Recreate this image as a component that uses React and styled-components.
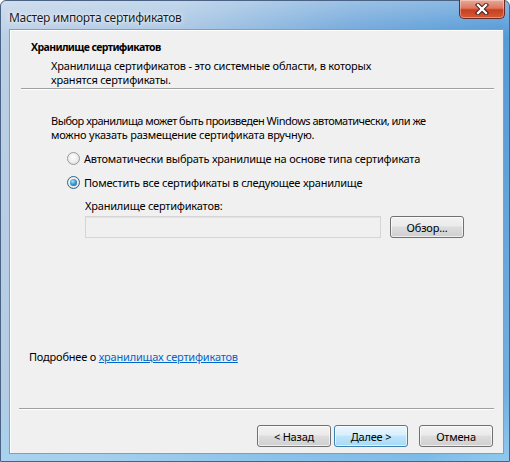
import React from "react";
import styled, { createGlobalStyle } from "styled-components";

const Global = createGlobalStyle`
  html, body { margin: 0; padding: 0; background: #fff; }
  body {
    font-family: "Noto Sans", "Open Sans", sans-serif;
    font-size: 11px;
    letter-spacing: -0.2px;
    color: #000;
  }
  * { box-sizing: border-box; }
`;

const Frame = styled.div`
  width: 510px;
  height: 462px;
  display: flex;
  flex-direction: column;
  padding: 0 5px 7px 8px;
  border: 1px solid #4a6384;
  border-radius: 6px 6px 0 0;
  background:
    linear-gradient(180deg, rgba(255,255,255,0.3) 0%, rgba(255,255,255,0) 8%),
    linear-gradient(180deg, rgba(255,255,255,0) 85%, rgba(160,215,245,0.6) 100%),
    linear-gradient(100deg, #bcd0e6 0%, #a9c6e3 30%, #6fa6da 60%, #4f97d6 85%, #78b4e2 100%);
`;

const TitleBar = styled.div`
  height: 28px;
  display: flex;
  align-items: flex-start;
  justify-content: space-between;
`;

const Title = styled.span`
  margin-top: 10px;
  font-size: 12px;
  letter-spacing: -0.3px;
  line-height: 14px;
  color: #1a1a1a;
  text-shadow: 0 0 6px rgba(255,255,255,0.9), 0 0 2px rgba(255,255,255,0.9);
`;

const CloseButton = styled.div`
  width: 46px;
  height: 19px;
  margin-top: -1px;
  margin-right: -1px;
  border: 1px solid #6b2b22;
  border-top: none;
  border-radius: 0 0 5px 5px;
  display: flex;
  align-items: center;
  justify-content: center;
  background: linear-gradient(180deg, #eaa898 0%, #dc7760 45%, #c8401f 55%, #d35a3a 100%);
  box-shadow: inset 0 0 0 1px rgba(255,255,255,0.35);
`;

const Client = styled.div`
  flex: 1;
  display: flex;
  flex-direction: column;
  background: #f0f0f0;
  border: 1px solid #8b9cae;
  box-shadow: inset 1px 1px 0 #fff;
`;

const Header = styled.div`
  height: 58px;
  padding: 10px 0 0 21px;
`;

const HeaderTitle = styled.div`
  font-size: 10.5px;
  font-weight: bold;
  line-height: 14px;
  margin-bottom: 5px;
  letter-spacing: -0.6px;
`;

const Text = styled.div`
  line-height: 14px;
  white-space: nowrap;
  padding-left: ${(p) => p.indent || 0}px;
  letter-spacing: ${(p) => (p.tight ? "-0.5px" : "inherit")};
`;

const Separator = styled.div`
  margin: 0 ${(p) => p.right}px 0 ${(p) => p.left}px;
  height: 2px;
  border-top: 1px solid #a0a0a0;
  border-bottom: 1px solid #ffffff;
`;

const Body = styled.div`
  flex: 1;
  display: flex;
  flex-direction: column;
  padding: 24px 0 0 41px;
`;

const RadioRow = styled.label`
  display: flex;
  align-items: center;
  gap: 4px;
  height: 16px;
  margin-left: 16px;
  margin-top: ${(p) => p.top}px;
  white-space: nowrap;
`;

const RadioDot = styled.span`
  flex: none;
  width: 13px;
  height: 13px;
  border-radius: 50%;
  border: 1px solid ${(p) => (p.checked ? "#2c628b" : "#9a9a9a")};
  background: radial-gradient(circle at 45% 40%, #ffffff 0%, #ececec 55%, #cfcfcf 100%);
  display: flex;
  align-items: center;
  justify-content: center;
  &::after {
    content: "";
    display: ${(p) => (p.checked ? "block" : "none")};
    width: 7px;
    height: 7px;
    border-radius: 50%;
    background: radial-gradient(circle at 40% 35%, #a8e3fb 0%, #3c9bd4 45%, #13527f 100%);
  }
`;

const FieldLabel = styled.div`
  line-height: 14px;
  margin: 9px 0 0 34px;
`;

const FieldRow = styled.div`
  display: flex;
  gap: 9px;
  margin: 3px 0 0 34px;
`;

const Input = styled.div`
  width: 296px;
  height: 22px;
  border: 1px solid #d5d5d5;
  background: #f0f0f0;
  box-shadow: inset 0 1px 0 #e3e3e3;
`;

const Button = styled.div`
  width: ${(p) => p.w || 74}px;
  height: 22px;
  border-radius: 3px;
  border: 1px solid ${(p) => (p.primary ? "#3c7fb1" : "#707070")};
  display: flex;
  align-items: center;
  justify-content: center;
  color: #000;
  background: ${(p) =>
    p.primary
      ? "linear-gradient(180deg, #eaf6fd 0%, #d9f0fc 45%, #bee6fd 50%, #a7d9f5 100%)"
      : "linear-gradient(180deg, #f2f2f2 0%, #ebebeb 45%, #dddddd 50%, #cfcfcf 100%)"};
  box-shadow: inset 0 0 0 1px rgba(255,255,255,0.65);
`;

const Spacer = styled.div`
  flex: 1;
`;

const LinkLine = styled.div`
  line-height: 14px;
  margin: 0 0 44px -22px;
`;

const Link = styled.span`
  color: #0066cc;
  text-decoration: underline;
`;

const Footer = styled.div`
  height: 43px;
  display: flex;
  align-items: flex-start;
  padding: 15px 10px 0 0;
  justify-content: flex-end;
`;

const NavGroup = styled.div`
  display: flex;
  gap: 3px;
  margin-right: 11px;
`;

function CloseGlyph() {
  return (
    <svg width="14" height="12" viewBox="0 0 14 12">
      <path
        d="M3 2 L11 10 M11 2 L3 10"
        stroke="#3b1510"
        strokeWidth="4.2"
        strokeLinecap="square"
        fill="none"
      />
      <path
        d="M3 2 L11 10 M11 2 L3 10"
        stroke="#ffffff"
        strokeWidth="2.4"
        strokeLinecap="square"
        fill="none"
      />
    </svg>
  );
}

export default function App() {
  return (
    <>
      <Global />
      <Frame>
        <TitleBar>
          <Title>Мастер импорта сертификатов</Title>
          <CloseButton>
            <CloseGlyph />
          </CloseButton>
        </TitleBar>
        <Client>
          <Header>
            <HeaderTitle>Хранилище сертификатов</HeaderTitle>
            <Text indent={20}>Хранилища сертификатов - это системные области, в которых</Text>
            <Text indent={20}>хранятся сертификаты.</Text>
          </Header>
          <Separator left={11} right={9} />
          <Body>
            <Text tight>Выбор хранилища может быть произведен Windows автоматически, или же</Text>
            <Text>можно указать размещение сертификата вручную.</Text>
            <RadioRow top={8}>
              <RadioDot />
              Автоматически выбрать хранилище на основе типа сертификата
            </RadioRow>
            <RadioRow top={8}>
              <RadioDot checked />
              Поместить все сертификаты в следующее хранилище
            </RadioRow>
            <FieldLabel>Хранилище сертификатов:</FieldLabel>
            <FieldRow>
              <Input />
              <Button>Обзор...</Button>
            </FieldRow>
            <Spacer />
            <LinkLine>
              Подробнее о <Link>хранилищах сертификатов</Link>
            </LinkLine>
          </Body>
          <Separator left={9} right={9} />
          <Footer>
            <NavGroup>
              <Button>&lt; Назад</Button>
              <Button primary>Далее &gt;</Button>
            </NavGroup>
            <Button>Отмена</Button>
          </Footer>
        </Client>
      </Frame>
    </>
  );
}
